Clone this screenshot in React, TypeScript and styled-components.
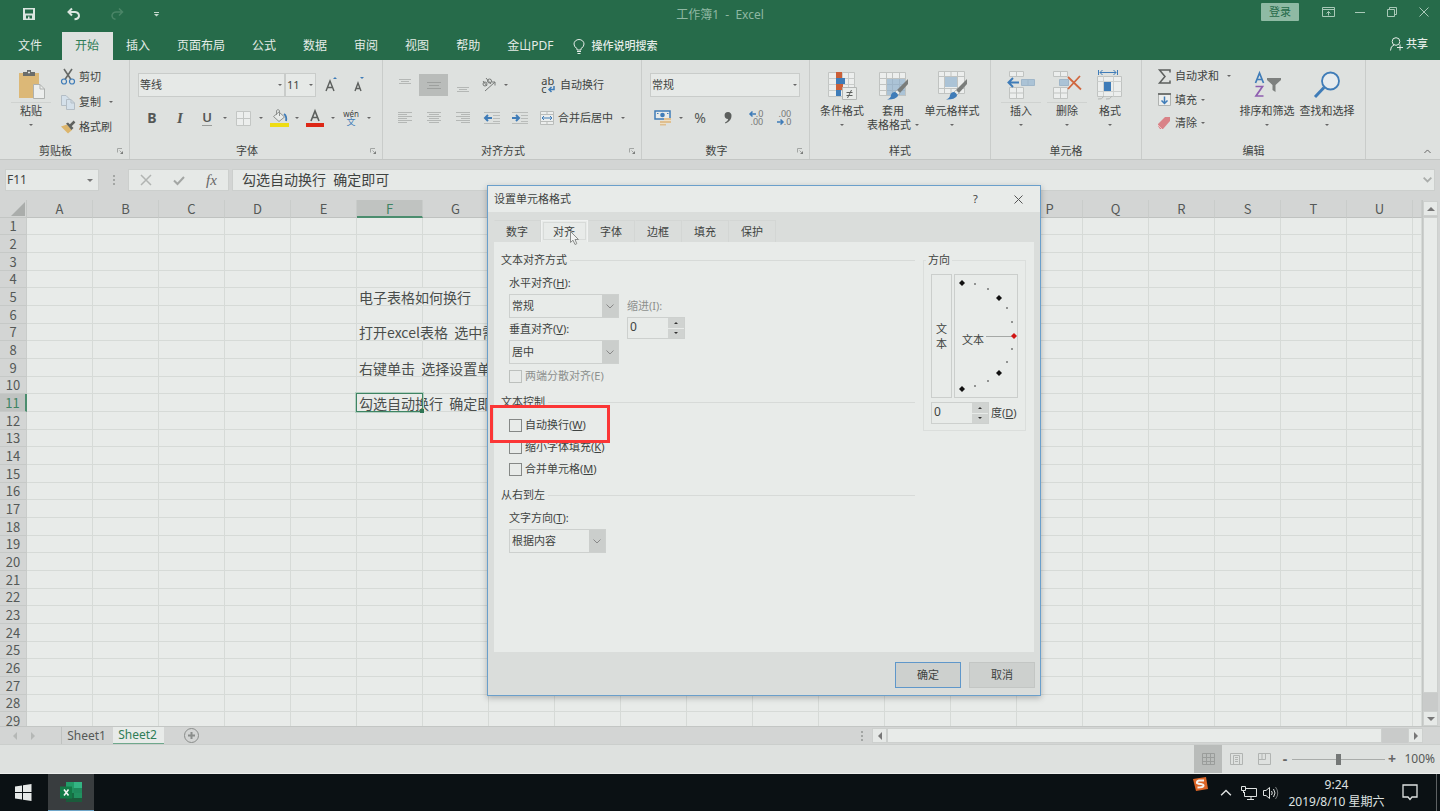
import React from "react";
import styled, { createGlobalStyle, css } from "styled-components";

const c = {
  green: "#266b4a",
  greenText: "#2f7d57",
  ribbon: "#dee1df",
  chrome: "#d3d5d4",
  field: "#e6e9e7",
  sheet: "#e8ebe9",
  line: "#d6dad7",
  edge: "#c3c6c4",
  ink: "#3f4341",
  muted: "#8d908e",
  blue: "#3f7cb8",
  panel: "#dadddb",
};

const ui = `"Noto Sans", "Noto Sans CJK SC", sans-serif`;
const cell = `"Noto Sans CJK SC", "Noto Sans", sans-serif`;

const Global = createGlobalStyle`
  *, *::before, *::after { box-sizing: border-box; }
  html, body { margin: 0; height: 100%; }
  body { font: 11px/14px ${ui}; color: ${c.ink}; background: ${c.chrome}; overflow: hidden; }
  button, input, select { font: inherit; color: inherit; margin: 0; padding: 0; border: 0; border-radius: 0; background: none; outline: none; }
  button { white-space: nowrap; }
  svg { display: block; flex: none; overflow: visible; }
`;

/* ---------- window shell ---------- */
const Shell = styled.div`
  position: relative;
  display: flex;
  flex-direction: column;
  height: 100vh;
`;
const TitleBar = styled.header`
  display: grid;
  grid-template-columns: 1fr auto 1fr;
  height: 32px;
  background: ${c.green};
  color: #d9e5de;
`;
const QuickAccess = styled.div`
  display: flex;
  height: 28px;
  padding-left: 6px;
`;
const TitleText = styled.div`
  padding-top: 8px;
  font-size: 12px;
  color: #8fb8a3;
  white-space: pre;
`;
const WindowControls = styled.div`
  display: flex;
  justify-content: flex-end;
  height: 24px;
  color: #a9c9b8;
`;
const ChromeButton = styled.button<{ $w: number }>`
  display: flex;
  align-items: center;
  justify-content: center;
  width: ${(p) => p.$w}px;
`;
const SignIn = styled.button`
  width: 38px;
  height: 18px;
  margin: 3px 13px 0 0;
  border-radius: 1px;
  background: #8fbaa4;
  color: ${c.green};
`;
const TabBar = styled.nav`
  display: flex;
  height: 28px;
  background: ${c.green};
  color: #e4ece7;
`;
const RibbonTab = styled.button<{ $active?: boolean; $file?: boolean }>`
  padding: 0 14px 0 13px;
  font-size: 12px;
  ${(p) => p.$file && css`padding: 0 20px 0 18px;`}
  ${(p) => p.$active && css`
    background: ${c.ribbon};
    color: ${c.greenText};
  `}
`;
const TellMe = styled.button`
  display: flex;
  align-items: center;
  gap: 6px;
  margin-left: 6px;
  font-weight: 500;
`;
const Share = styled.button`
  display: flex;
  align-items: center;
  gap: 3px;
  height: 24px;
  margin: 0 12px 0 auto;
  font-weight: 500;
`;

/* ---------- ribbon ---------- */
const Ribbon = styled.section`
  display: flex;
  height: 100px;
  background: ${c.ribbon};
  border-bottom: 1px solid ${c.edge};
`;
const Group = styled.div<{ $w: number }>`
  display: flex;
  flex-direction: column;
  width: ${(p) => p.$w}px;
  border-right: 1px solid #c9ccca;
`;
const GroupBody = styled.div<{ $left: number; $top: number }>`
  display: flex;
  flex: 1;
  padding: ${(p) => p.$top}px 0 0 ${(p) => p.$left}px;
`;
const GroupFoot = styled.div`
  display: flex;
  align-items: center;
  height: 16px;
  text-align: center;
  span { flex: 1; }
  button { display: flex; justify-content: center; width: 18px; }
`;
const Stack = styled.div<{ $gap: number; $w?: number }>`
  display: flex;
  flex-direction: column;
  gap: ${(p) => p.$gap}px;
  ${(p) => p.$w && css`width: ${p.$w}px;`}
`;
const ToolRow = styled.div`
  display: flex;
  align-items: center;
  height: 24px;
`;
const Cluster = styled.div`
  display: flex;
  width: 145px;
`;
const Tool = styled.button<{ $w?: number; $on?: boolean }>`
  display: flex;
  align-items: center;
  justify-content: center;
  width: ${(p) => p.$w ?? 28}px;
  height: 22px;
  background: ${(p) => (p.$on ? "#b9bcba" : "transparent")};
`;
const Drop = styled.button`
  display: flex;
  align-items: center;
  justify-content: center;
  width: 10px;
  height: 22px;
`;
const TextTool = styled.button<{ $h?: number }>`
  display: flex;
  align-items: center;
  gap: 4px;
  height: ${(p) => p.$h ?? 24}px;
`;
const ToolIcon = styled.span<{ $w: number }>`
  display: flex;
  justify-content: center;
  width: ${(p) => p.$w}px;
`;
const DropMark = styled.span`
  display: flex;
  padding-left: 4px;
`;
const BigTool = styled.button<{ $w: number }>`
  display: flex;
  flex-direction: column;
  align-items: center;
  width: ${(p) => p.$w}px;
  height: 64px;
`;
const BigIcon = styled.span<{ $split?: boolean }>`
  display: flex;
  align-items: center;
  justify-content: center;
  width: 40px;
  height: 33px;
  padding-bottom: 3px;
  margin-bottom: 1px;
  border-bottom: 1px solid ${(p) => (p.$split ? "#cfd2d0" : "transparent")};
`;
const BigLine = styled.span`
  display: flex;
  align-items: center;
  justify-content: center;
  gap: 4px;
  height: 14px;
`;
const Combo = styled.span<{ $w: number }>`
  position: relative;
  display: block;
  width: ${(p) => p.$w}px;
  height: 24px;
  select {
    width: 100%;
    height: 100%;
    padding: 0 12px 0 1px;
    appearance: none;
    background: ${c.field};
    border: 1px solid #c9ccca;
  }
  & + & select { border-left: 0; padding-left: 2px; font-size: 12px; }
  svg { position: absolute; right: 3px; top: 11px; pointer-events: none; }
`;
const SizeTools = styled.div`
  display: flex;
  padding-left: 2px;
`;
const Letter = styled.span<{ $size: number; $b?: boolean; $i?: boolean; $u?: boolean }>`
  font-size: ${(p) => p.$size}px;
  line-height: 16px;
  font-weight: ${(p) => (p.$b ? 700 : 400)};
  color: #555856;
  ${(p) => p.$i && css`font-family: "Liberation Serif", serif; font-style: italic; font-weight: 700;`}
  ${(p) => p.$u && css`font-weight: 600; line-height: 15px; border-bottom: 1px solid #999c9a;`}
`;
const Collapse = styled.button`
  align-self: flex-end;
  margin: 0 9px 6px auto;
`;

/* ---------- formula bar ---------- */
const FormulaRow = styled.div`
  display: flex;
  height: 40px;
  padding: 9px 5px 9px 5px;
  background: ${c.chrome};
`;
const NameBox = styled.div`
  display: flex;
  align-items: center;
  width: 94px;
  background: ${c.field};
  border: 1px solid #cccfcd;
  input { flex: 1; min-width: 0; padding-left: 1px; font-size: 12px; }
  button { width: 16px; display: flex; justify-content: center; }
`;
const Grip = styled.span`
  display: flex;
  align-items: center;
  justify-content: center;
  width: 29px;
`;
const FormulaTools = styled.div`
  display: flex;
  width: 101px;
  margin-right: 3px;
  background: ${c.field};
  border: 1px solid #cccfcd;
  button { flex: 1; display: flex; align-items: center; justify-content: center; }
`;
const Fx = styled.i`
  font: italic 15px/16px "Liberation Serif", serif;
  color: #666;
`;
const FormulaField = styled.div`
  display: flex;
  align-items: center;
  flex: 1;
  background: ${c.field};
  border: 1px solid #cccfcd;
  input { flex: 1; height: 18px; padding: 0 0 2px 9px; font-size: 14px; }
  button { padding-right: 2px; }
`;

/* ---------- worksheet ---------- */
const SheetArea = styled.main`
  display: flex;
  flex: 1;
  min-height: 0;
  background: ${c.chrome};
`;
const GridView = styled.div`
  flex: 1;
  overflow: hidden;
  background: ${c.sheet};
`;
const Grid = styled.table`
  width: 100%;
  table-layout: fixed;
  border-collapse: separate;
  border-spacing: 0;
  font: 14px/16px ${cell};
  color: #4a4e4c;
  th, td { padding: 0; height: inherit; }
  tbody tr { height: 18px; }
  tbody tr:nth-child(3n + 1) { height: 17px; }
  thead tr { height: 18px; }
`;
const Corner = styled.th`
  background: ${c.chrome};
  border-right: 1px solid ${c.edge};
  border-bottom: 1px solid ${c.edge};
  svg { margin: 1px 1px 0 auto; }
`;
const ColHead = styled.th<{ $on: boolean }>`
  font-size: 13px;
  font-weight: 400;
  background: ${(p) => (p.$on ? "#c0c3c1" : c.chrome)};
  color: ${(p) => (p.$on ? "#3e8463" : "#555957")};
  border-right: 1px solid #c9ccca;
  border-bottom: ${(p) => (p.$on ? "2px solid #4b8d6e" : "1px solid #bfc2c0")};
  line-height: 15px;
`;
const RowHead = styled.th<{ $on: boolean }>`
  font-size: 13px;
  font-weight: 400;
  background: ${(p) => (p.$on ? "#c0c3c1" : c.chrome)};
  color: ${(p) => (p.$on ? "#3e8463" : "#555957")};
  border-right: ${(p) => (p.$on ? "2px solid #4b8d6e" : "1px solid #c9ccca")};
  border-bottom: 1px solid #c6c9c7;
`;
const Cell = styled.td<{ $spill: boolean; $on: boolean }>`
  position: ${(p) => (p.$on ? "relative" : "static")};
  white-space: pre;
  border-right: 1px solid ${(p) => (p.$spill ? "transparent" : c.line)};
  border-bottom: 1px solid ${c.line};
  span { padding-left: 2px; }
  ${(p) => p.$on && css`
    &::before {
      content: "";
      position: absolute;
      inset: -1px -1px -1px -1px;
      border: 1px solid #3e8463;
      outline: 1px solid #b5d0c2;
    }
    &::after {
      content: "";
      position: absolute;
      right: -2px;
      bottom: -2px;
      width: 4px;
      height: 4px;
      background: #2f7555;
    }
  `}
`;
const VScroll = styled.div`
  display: flex;
  flex-direction: column;
  width: 18px;
  padding: 1px 2px 0 0;
  border-left: 1px solid ${c.edge};
`;
const ScrollButton = styled.button`
  display: flex;
  align-items: center;
  justify-content: center;
  width: 15px;
  height: 15px;
  background: ${c.field};
  border: 1px solid #cdd0ce;
`;
const VTrack = styled.div`
  flex: 1;
  padding: 1px 0 18px;
  background: #c9cbca;
`;
const Thumb = styled.div`
  width: 100%;
  height: 100%;
  background: ${c.sheet};
  border: 1px solid #cdd0ce;
`;

/* ---------- sheet tabs and status ---------- */
const SheetBar = styled.div`
  display: flex;
  height: 19px;
  background: ${c.chrome};
  border-top: 1px solid ${c.edge};
  border-bottom: 1px solid #cbcecc;
`;
const SheetNav = styled.div`
  display: flex;
  align-items: center;
  gap: 14px;
  width: 62px;
  padding-left: 13px;
  border-right: 1px solid #bfc2c0;
`;
const SheetTab = styled.button<{ $on?: boolean }>`
  width: 51px;
  height: 17px;
  padding-right: 2px;
  font-size: 12px;
  line-height: 14px;
  color: #555957;
  ${(p) => p.$on && css`
    background: ${c.sheet};
    color: ${c.greenText};
    border-bottom: 1px solid #6fa88c;
  `}
`;
const AddSheet = styled.button`
  margin-left: 20px;
`;
const HScroll = styled.div`
  display: flex;
  align-items: center;
  width: 563px;
  margin-left: auto;
  margin-right: 17px;
`;
const HTrack = styled.div`
  flex: 1;
  height: 15px;
  padding-right: 26px;
  background: #c9cbca;
`;
const StatusBar = styled.footer`
  display: flex;
  align-items: center;
  justify-content: flex-end;
  height: 29px;
  background: ${c.ribbon};
  border-bottom: 1px solid #eceeed;
`;
const ViewButton = styled.button<{ $on?: boolean }>`
  display: flex;
  align-items: center;
  justify-content: center;
  width: 28px;
  height: 100%;
  background: ${(p) => (p.$on ? "#b9bcba" : "transparent")};
`;
const ZoomStep = styled.button`
  width: 14px;
  font-size: 14px;
  font-weight: 700;
  color: #666;
`;
const ZoomRange = styled.input`
  width: 93px;
  height: 12px;
  appearance: none;
  background: linear-gradient(#a9acaa, #a9acaa) center / 100% 1px no-repeat;
  &::-webkit-slider-thumb { appearance: none; width: 5px; height: 11px; background: #747776; }
`;
const ZoomValue = styled.span`
  width: 36px;
  margin-right: 5px;
  text-align: right;
  font-size: 12px;
  color: #555957;
`;

/* ---------- dialog ---------- */
const Dialog = styled.section`
  position: absolute;
  left: 487px;
  top: 185px;
  width: 554px;
  background: ${c.panel};
  border: 1px solid #6a9fcb;
  box-shadow: 0 2px 6px rgba(0, 0, 0, 0.25);
`;
const DialogTitle = styled.div`
  display: flex;
  align-items: center;
  height: 26px;
  padding-left: 6px;
  background: ${c.sheet};
  span { flex: 1; }
  button { display: flex; justify-content: center; width: 43px; }
`;
const DialogBody = styled.div`
  padding: 8px 5px 7px 6px;
`;
const DialogTabs = styled.div`
  display: flex;
`;
const DialogTab = styled.button<{ $on?: boolean }>`
  position: relative;
  width: 47px;
  height: 22px;
  padding-right: 1px;
  border: 1px solid #d3d6d4;
  border-left-color: transparent;
  border-bottom: 0;
  ${(p) => p.$on && css`
    background: ${c.sheet};
    border-color: #f0f2f1;
    outline: 1px solid #d8dbd9;
    outline-offset: -3px;
  `}
  svg { position: absolute; left: 28px; top: 10px; }
`;
const Page = styled.div`
  display: flex;
  align-items: flex-start;
  gap: 8px;
  min-height: 410px;
  margin-right: 1px;
  padding: 10px 8px 0 7px;
  background: ${c.sheet};
`;
const Sections = styled.div`
  display: flex;
  flex-direction: column;
  flex: 1;
  gap: 11px;
`;
const SectionTitle = styled.h3`
  display: flex;
  align-items: center;
  gap: 3px;
  margin: 0 0 8px;
  font: inherit;
  line-height: 16px;
  &::after { content: ""; flex: 1; height: 1px; background: #d7dad8; }
`;
const Fields = styled.div`
  display: flex;
  gap: 8px;
  padding-left: 8px;
`;
const FieldStack = styled.div<{ $gap?: number; $top?: number }>`
  display: flex;
  flex-direction: column;
  align-items: flex-start;
  gap: ${(p) => p.$gap ?? 4}px;
  padding-top: ${(p) => p.$top ?? 0}px;
`;
const Check = styled.label<{ $off?: boolean }>`
  display: flex;
  align-items: center;
  gap: 3px;
  height: 14px;
  color: ${(p) => (p.$off ? c.muted : "inherit")};
  input {
    width: 13px;
    height: 13px;
    appearance: none;
    border: 1px solid ${(p) => (p.$off ? "#bcc0bd" : "#858886")};
  }
`;
const CheckBlock = styled.div`
  padding: 5px 0 0 8px;
`;
const Label = styled.label<{ $off?: boolean }>`
  color: ${(p) => (p.$off ? c.muted : "inherit")};
`;
const Picker = styled.span<{ $w: number }>`
  position: relative;
  display: block;
  width: ${(p) => p.$w}px;
  height: 24px;
  select {
    width: 100%;
    height: 100%;
    padding: 0 18px 0 2px;
    appearance: none;
    border: 1px solid #cdd0ce;
  }
  span {
    position: absolute;
    right: 1px;
    top: 1px;
    bottom: 1px;
    display: flex;
    align-items: center;
    justify-content: center;
    width: 16px;
    background: #cbcecc;
    pointer-events: none;
  }
`;
const Spin = styled.span`
  display: flex;
  width: 58px;
  height: 22px;
  border: 1px solid #cdd0ce;
  input { flex: 1; min-width: 0; padding: 0 0 2px 2px; font-size: 12px; }
`;
const SpinButtons = styled.span`
  display: flex;
  flex-direction: column;
  gap: 1px;
  width: 16px;
  button { flex: 1; display: flex; align-items: center; justify-content: center; background: #d0d3d1; }
`;
const Orientation = styled.fieldset`
  width: 103px;
  min-width: 0;
  margin: 0;
  padding: 6px 7px;
  border: 1px solid #dbdedc;
  legend { margin-left: -5px; padding: 0 2px; line-height: 16px; }
`;
const OrientRow = styled.div`
  display: flex;
  gap: 2px;
  align-items: center;
  & + & { margin-top: 4px; }
  label { white-space: nowrap; }
`;
const VerticalText = styled.button`
  width: 22px;
  height: 124px;
  padding: 0 4px;
  line-height: 15px;
  white-space: normal;
  border: 1px solid #cbcecc;
`;
const Dial = styled.div`
  position: relative;
  width: 64px;
  height: 124px;
  border: 1px solid #cbcecc;
  span { position: absolute; left: 7px; top: 58px; }
`;
const DialogFoot = styled.div`
  display: flex;
  justify-content: flex-end;
  gap: 8px;
  padding-top: 10px;
`;
const PushButton = styled.button<{ $main?: boolean }>`
  width: 66px;
  height: 26px;
  background: #cdd0ce;
  border: 1px solid ${(p) => (p.$main ? "#5f97ca" : "#c3c6c4")};
`;
const Marker = styled.div`
  position: absolute;
  left: 2px;
  top: 219px;
  width: 120px;
  height: 38px;
  border: 3px solid #fb3636;
  pointer-events: none;
`;

/* ---------- taskbar ---------- */
const Taskbar = styled.footer`
  display: flex;
  height: 37px;
  background: #0b1114;
  color: #dfe2e1;
`;
const TaskButton = styled.button<{ $w: number; $on?: boolean }>`
  display: flex;
  align-items: center;
  justify-content: center;
  width: ${(p) => p.$w}px;
  padding-right: 2px;
  ${(p) => p.$on && css`
    padding-right: 0;
    background: #393d3f;
    border-bottom: 1px solid #6fa6c9;
  `}
`;
const Tray = styled.div`
  display: flex;
  margin-left: auto;
  padding-right: 3px;
  button { display: flex; justify-content: center; align-items: center; }
`;
const SogouSlot = styled.button`
  width: 26px;
  padding-bottom: 17px;
`;
const TrayButton = styled.button<{ $w: number }>`
  width: ${(p) => p.$w}px;
`;
const Clock = styled.div`
  width: 109px;
  padding-top: 2px;
  font-size: 12px;
  line-height: 17px;
  text-align: center;
  white-space: nowrap;
`;
const ShowDesktop = styled.span`
  width: 1px;
  background: #5d6163;
`;

/* ---------- icons ---------- */
const Caret = ({ up, w = 4, color = "#666" }: { up?: boolean; w?: number; color?: string }) => (
  <svg width={w} height={w / 2} viewBox="0 0 4 2">
    <path d={up ? "M0 2L2 0L4 2Z" : "M0 0H4L2 2Z"} fill={color} />
  </svg>
);
const Side = ({ left, h = 8, color = "#777" }: { left?: boolean; h?: number; color?: string }) => (
  <svg width={h / 2} height={h} viewBox="0 0 4 8">
    <path d={left ? "M4 0V8L0 4Z" : "M0 0V8L4 4Z"} fill={color} />
  </svg>
);
const Chevron = ({ up, color = "#888", w = 8, bold }: { up?: boolean; color?: string; w?: number; bold?: boolean }) => (
  <svg width={w} height={w / 2 + 1} viewBox="0 0 8 5" fill="none" stroke={color} strokeWidth={bold ? 1.6 : 1}>
    <path d={up ? "M.5 4.5L4 1L7.5 4.5" : "M.5 .5L4 4L7.5 .5"} />
  </svg>
);
const Launcher = () => (
  <svg width="6" height="6" fill="none">
    <path d="M.5 4.500V.5H5" stroke="#a3a6a4" />
    <path d="M2.500 2.500L4.500 4.500" stroke="#a3a6a4" />
    <path d="M6 3V6H3Z" fill="#7c7f7d" />
  </svg>
);
const Lines = ({ rows }: { rows: [number, number, number][] }) => (
  <svg width="14" height="12" stroke="#b4b7b5">
    {rows.map(([x, w, y]) => (
      <path key={y} d={`M${x} ${y}.5h${w}`} />
    ))}
  </svg>
);
const MiddleLines = () => (
  <svg width="14" height="12" stroke="#9da09e">
    <path d="M0 3.500H14M2 6.500H12M0 9.500H14" />
  </svg>
);
const Indent = ({ right }: { right?: boolean }) => (
  <svg width="16" height="12" fill="none">
    <path d="M0 .5H16M9 3.500H16M9 6.500H16M9 9.500H16M0 11.500H16" stroke="#b9bcba" />
    <path d={right ? "M0 6H7M4 3L7 6L4 9" : "M8 6H1M4 3L1 6L4 9"} stroke={c.blue} strokeWidth="2" />
  </svg>
);
const PasteIcon = () => (
  <svg width="28" height="30">
    <path d="M2 3H22V28H2Z" fill="#dcb877" />
    <path d="M6 2H10V0H14V2H18V6H6Z" fill="#6a6d6b" />
    <path d="M11 2.500H13" stroke="#dee1df" strokeWidth="1.500" />
    <path d="M16.500 14.500H23L27.500 19V28.500H16.500Z" fill="#eceeed" stroke="#aeb1af" />
    <path d="M23 14.500V19H27.500" fill="none" stroke="#aeb1af" />
  </svg>
);
const CutIcon = () => (
  <svg width="14" height="16" fill="none">
    <path d="M3 0L10 10.500M11 0L4 10.500" stroke="#666967" strokeWidth="1.600" />
    <circle cx="3" cy="12.500" r="2.500" stroke={c.blue} strokeWidth="1.200" />
    <circle cx="11" cy="12.500" r="2.500" stroke={c.blue} strokeWidth="1.200" />
  </svg>
);
const CopyIcon = () => (
  <svg width="15" height="15" fill="#d4e0ea" stroke="#b3bdc5">
    <path d="M.5 .5H5L8.500 4V10.500H.5Z" />
    <path d="M5.500 4.500H10L13.500 8V14.500H5.500Z" />
    <path d="M10 4.500V8H13.500" fill="none" />
  </svg>
);
const BrushIcon = () => (
  <svg width="15" height="13">
    <path d="M0 5.500L6 3.500L11 9L7 12.500Z" fill="#dcb56c" />
    <path d="M5 2.500L7 1.500L12.500 7L10.500 9Z" fill="#5f6260" />
    <path d="M9 5L13.500 .5" stroke="#5f6260" strokeWidth="2.500" />
  </svg>
);
const FontSizeIcon = ({ down }: { down?: boolean }) => (
  <svg width="14" height="16" fill="none">
    <path d={down ? "M2 14L5 6L8 14M3 11.500H7" : "M1 14L5 4L9 14M2.500 10.500H7.500"} stroke="#5c5f5d" strokeWidth="1.400" />
    <path d={down ? "M7 0H11L9 2Z" : "M8 2L10 0L12 2Z"} fill={c.blue} />
  </svg>
);
const BordersIcon = () => (
  <svg width="15" height="15" fill="#eceeed" stroke="#c3c6c4">
    <path d="M.5 .5H14.500V14.500H.5ZM7.500 .5V14.500M.5 7.500H14.500" />
  </svg>
);
const FillIcon = () => (
  <svg width="19" height="18" fill="none">
    <path d="M9 3L14.500 8L9 12.500L3.500 7.500Z" fill="#e8ebe9" stroke="#8f9290" />
    <path d="M6.500 6V1.500Q8 -.5 9.500 1.500V7" stroke="#8f9290" />
    <path d="M14 5Q17 7 16 12" stroke={c.blue} strokeWidth="1.800" />
    <path d="M0 14H19V18H0Z" fill="#eedc14" />
  </svg>
);
const FontColorIcon = () => (
  <svg width="18" height="18" fill="none">
    <path d="M5 12L9 2L13 12M6.500 8.500H11.500" stroke="#5c5f5d" strokeWidth="1.600" />
    <path d="M0 14H18V18H0Z" fill="#dd2716" />
  </svg>
);
const Phonetic = styled.span`
  display: flex;
  flex-direction: column;
  align-items: center;
  font-size: 8px;
  line-height: 6px;
  b { font-weight: 400; font-size: 9px; line-height: 9px; color: ${c.blue}; }
`;
const OrientIcon = () => (
  <svg width="16" height="16" fill="none" stroke="#777a78">
    <circle cx="4" cy="7" r="2" />
    <path d="M2 4L6 9M5 1L10 7" />
    <circle cx="8.500" cy="4" r="2" />
    <path d="M4 14L14 5M10.500 5H14V8.500" />
  </svg>
);
const Abc = styled.span`
  display: flex;
  flex-direction: column;
  font-size: 11px;
  line-height: 8px;
  text-align: left;
  span { display: flex; align-items: center; gap: 1px; }
`;
const MergeIcon = () => (
  <svg width="14" height="14" fill="none">
    <path d="M.5 .5H13.500V13.500H.5ZM.5 3.500H13.500M.5 10.500H13.500M7 .5V3M7 11V13.500" fill="#eceeed" stroke="#b9bcba" />
    <path d="M2 7H12M4 5L2 7L4 9M10 5L12 7L10 9" stroke={c.blue} />
  </svg>
);
const MoneyIcon = () => (
  <svg width="18" height="16">
    <path d="M1 1H16V9H1Z" fill="#e8ebe9" stroke={c.blue} strokeWidth="1.500" />
    <circle cx="8.500" cy="5" r="2.300" fill={c.blue} />
    <path d="M3 3h1.500v1H3ZM13 3h1.500v1H13Z" fill={c.blue} />
    <path d="M10 8H17V13H10ZM6 11H12V15.500H6Z" fill="#dfbf90" />
    <path d="M10 10.500H17M6 13.500H12" stroke="#efe0c5" />
  </svg>
);
const CommaIcon = () => (
  <svg width="8" height="12">
    <path d="M4 0A3.500 3.500 0 0 1 7.500 4Q7.500 9 1.500 11.500L1 10.500Q4 9 4.200 7A3.500 3.500 0 1 1 4 0Z" fill="#5c5f5d" />
  </svg>
);
const Decimals = styled.span`
  display: flex;
  flex-direction: column;
  align-items: flex-end;
  font-size: 9px;
  line-height: 8px;
  color: #777a78;
  span { display: flex; align-items: center; }
`;
const SmallArrow = ({ left }: { left?: boolean }) => (
  <svg width="7" height="6" fill="none" stroke={c.blue} strokeWidth="1.500">
    <path d={left ? "M7 3H1M3.500 .5L1 3L3.500 5.500" : "M0 3H6M3.500 .5L6 3L3.500 5.500"} />
  </svg>
);
const ReturnArrow = () => (
  <svg width="7" height="6" fill="none" stroke={c.blue} strokeWidth="1.500">
    <path d="M6 0V3.500H1M3.500 1L1 3.500L3.500 6" />
  </svg>
);
const CondIcon = () => (
  <svg width="30" height="30" fill="none">
    <path d="M1.500 2.500H27.500V26.500H1.500Z" fill="#eceeed" stroke="#c2c5c3" />
    <path d="M1.500 8.500H27.500M1.500 14.500H27.500M1.500 20.500H27.500M9.500 2.500V26.500M15.500 2.500V26.500M21.500 2.500V26.500" stroke="#c9ccca" />
    <path d="M9 2H15V8H9ZM9 14H16V20H9Z" fill="#cb5f38" />
    <path d="M9 8H18V14H9ZM9 20H14V26H9Z" fill={c.blue} />
    <path d="M15.500 17.500H29.500V29.500H15.500Z" fill="#e8ebe9" stroke="#b3b6b4" />
    <path d="M19.500 22.500H25.500M19.500 25.500H25.500M24.500 20L20.500 28" stroke="#5c5f5d" />
  </svg>
);
const Brush = () => (
  <g>
    <path d="M30 9L30 14L22 23L19 20Z" fill="#7a7d7b" />
    <path d="M19 20L22 23L20 25L17 22Z" fill="#e8ebe9" stroke="#9a9d9b" strokeWidth=".6" />
    <path d="M17 22Q20 23 20 26Q17 30 9 29.500Q13 28 13 25Q14 22 17 22Z" fill={c.blue} />
  </g>
);
const TableFmtIcon = () => (
  <svg width="30" height="30" fill="none">
    <path d="M1.500 2.500H27.500V25.500H1.500Z" fill="#eceeed" />
    <path d="M8 8H28V26H8Z" fill="#abc3d6" />
    <path d="M1.500 2.500H27.500V25.500H1.500ZM1.500 8.500H27.500M1.500 14.500H8M1.500 20.500H8M8.500 2.500V25.500M14.500 2.500V8M21.500 2.500V8" stroke="#c0c3c1" />
    <path d="M9 14.500H27M9 20.500H27M14.500 9V25M21.500 9V25" stroke="#9fb6c9" />
    <Brush />
  </svg>
);
const CellStyleIcon = () => (
  <svg width="30" height="30" fill="none">
    <path d="M1.500 1.500H27.500V23.500H1.500Z" fill="#eceeed" />
    <path d="M1.500 1.500H27.500V23.500H1.500ZM1.500 6.500H27.500M1.500 18.500H27.500M7.500 1.500V23.500M20.500 1.500V23.500M14 1.500V6M14 19V23.500" stroke="#c0c3c1" />
    <path d="M8 7H20V17H8Z" fill="#abc3d6" />
    <Brush />
  </svg>
);
const InsertIcon = () => (
  <svg width="28" height="30" fill="none">
    <path d="M2.500 1.500H16.500V6.500H2.500ZM9.500 1.500V6.500M2.500 17.500H16.500V28.500H2.500ZM9.500 17.500V28.500M2.500 23H16.500" fill="#eceeed" stroke="#c0c3c1" />
    <path d="M14.500 9.500H27.500V15.500H14.500ZM21 9.500V15.500" fill="#abc3d6" stroke="#9fb6c9" />
    <path d="M12 12.500H2M6 8L1.500 12.500L6 17" stroke={c.blue} strokeWidth="2" />
  </svg>
);
const DeleteIcon = () => (
  <svg width="28" height="30" fill="none">
    <path d="M.5 1.500H14.500V6.500H.5ZM7.500 1.500V6.500M.5 17.500H14.500V28.500H.5ZM7.500 17.500V28.500M.5 23H14.500" fill="#eceeed" stroke="#c0c3c1" />
    <path d="M6.500 9.500H15.500V15.500H6.500Z" fill="#abc3d6" stroke="#9fb6c9" />
    <path d="M15 7L28 19.500M27 6L15 19" stroke="#d0673f" strokeWidth="1.800" />
  </svg>
);
const FormatIcon = () => (
  <svg width="26" height="30" fill="none">
    <path d="M3 2.500H19M5.500 0L3 2.500L5.500 5M16.500 0L19 2.500L16.500 5M1.500 0V5M20.500 0V5" stroke={c.blue} />
    <path d="M.5 6.500H24.500V26.500H.5Z" fill="#eceeed" stroke="#c0c3c1" />
    <path d="M6.500 6.500V26.500M16.500 6.500V26.500M.5 11.500H24.500M.5 21.500H24.500" stroke="#cdd0ce" />
    <path d="M7 12H14V21H7Z" fill={c.blue} />
    <path d="M1 29Q5 30 7 26M9 29Q13 30 15 26" stroke="#b3b6b4" />
  </svg>
);
const SumIcon = () => (
  <svg width="13" height="15" fill="none" stroke="#5c5f5d" strokeWidth="1.500">
    <path d="M12 3.500V1H1.500L7 7.500L1.500 14H12V11.500" />
  </svg>
);
const FillDownIcon = () => (
  <svg width="13" height="13" fill="none">
    <path d="M.5 .5H12.500V12.500H.5Z" fill="#eceeed" stroke="#b0b3b1" />
    <path d="M0 0H13V2H0Z" fill="#727573" />
    <path d="M6.500 3.500V10.500M3.500 7.500L6.500 10.500L9.500 7.500" stroke={c.blue} strokeWidth="1.500" />
  </svg>
);
const EraserIcon = () => (
  <svg width="12" height="12">
    <path d="M7 0H12V4L5 12H2L0 9V7Z" fill="#d98287" />
    <path d="M0 8L4 12" stroke="#eebfc1" />
  </svg>
);
const SortFilterIcon = () => (
  <svg width="28" height="28" fill="none">
    <path d="M2.500 12L6.500 2L10.500 12M4 8.500H9" stroke={c.blue} strokeWidth="1.700" />
    <path d="M2.500 15.500H9.500L3 25H10.500" stroke="#8e5eb0" strokeWidth="1.700" />
    <path d="M14 7H28V9L22.500 14V21L19.500 19V14L14 9Z" fill="#7d807e" />
  </svg>
);
const SearchIcon = () => (
  <svg width="28" height="28" fill="none" stroke={c.blue}>
    <circle cx="17.500" cy="10" r="8.500" strokeWidth="1.800" fill="#e6ebee" />
    <path d="M11 16.500L2 26" strokeWidth="3" />
  </svg>
);
const WinLogo = () => (
  <svg width="17" height="17" fill="#e6e9e8">
    <path d="M0 2.500L7 1.500V8H0ZM8 1.300L16.500 0V8H8ZM0 9H7V15.500L0 14.500ZM8 9H16.500V17L8 15.700Z" />
  </svg>
);
const ExcelLogo = () => (
  <svg width="23" height="21">
    <path d="M6 0H22V20H6Z" fill="#21905f" />
    <path d="M14 0H22V6H14Z" fill="#33b483" />
    <path d="M6 0H14V6H6Z" fill="#229b68" />
    <path d="M14 6H22V11H14Z" fill="#1f8a5c" />
    <path d="M6 11H14V16H6Z" fill="#176a43" />
    <path d="M6 16H22V20H6Z" fill="#1b5b3b" />
    <path d="M0 4.500H12V16.500H0Z" fill="#127a46" />
    <path d="M4 7.500L8.500 13.500M8.500 7.500L4 13.500" stroke="#f1f4f2" strokeWidth="1.600" />
  </svg>
);

/* ---------- data ---------- */
const columns = "ABCDEFGHIJKLMNOPQRSTU".split("");
const rowNumbers = Array.from({ length: 29 }, (_, i) => i + 1);
const notes: Record<number, { text: string; spill: string }> = {
  5: { text: "电子表格如何换行", spill: "F" },
  7: { text: "打开excel表格  选中需", spill: "FG" },
  9: { text: "右键单击  选择设置单", spill: "FG" },
  11: { text: "勾选自动换行  确定即可", spill: "FG" },
};
const moreTabs = ["插入", "页面布局", "公式", "数据", "审阅", "视图", "帮助", "金山PDF"];

const Key = ({ children, k, colon }: { children: React.ReactNode; k: string; colon?: boolean }) => (
  <span>
    {children}(<u>{k}</u>){colon && ":"}
  </span>
);

const RibbonGroup = ({ w, name, left, top, launch, children }: {
  w: number; name: string; left: number; top: number; launch?: boolean; children: React.ReactNode;
}) => (
  <Group $w={w}>
    <GroupBody $left={left} $top={top}>{children}</GroupBody>
    <GroupFoot>
      <span>{name}</span>
      {launch && <button aria-label={name}><Launcher /></button>}
    </GroupFoot>
  </Group>
);

const Split = ({ icon, w = 26, label }: { icon: React.ReactNode; w?: number; label: string }) => (
  <>
    <Tool $w={w} aria-label={label}>{icon}</Tool>
    <Drop aria-label={label}><Caret /></Drop>
  </>
);

const Big = ({ w, icon, lines, split }: { w: number; icon: React.ReactNode; lines: string[]; split?: boolean }) => (
  <BigTool $w={w}>
    <BigIcon $split={split}>{icon}</BigIcon>
    <BigLine>{lines[0]}</BigLine>
    <BigLine>{lines[1]}<Caret /></BigLine>
  </BigTool>
);

const Select = ({ id, w, value }: { id: string; w: number; value: string }) => (
  <Picker $w={w}>
    <select id={id}><option>{value}</option></select>
    <span><Chevron /></span>
  </Picker>
);

const Spinner = ({ id }: { id: string }) => (
  <Spin>
    <input id={id} defaultValue="0" />
    <SpinButtons>
      <button aria-label="+"><Caret up color="#333" /></button>
      <button aria-label="-"><Caret color="#333" /></button>
    </SpinButtons>
  </Spin>
);

const ClipStack = styled(Stack).attrs({ $gap: 1 })`
  margin: -5px 0 0 10px;
`;
const FindTools = styled.div`
  display: flex;
  padding-top: 6px;
`;
const WrapTool = styled(TextTool)`
  padding-left: 5px;
`;

const RibbonView = () => (
  <Ribbon>
    <RibbonGroup w={130} name="剪贴板" left={11} top={10} launch>
      <Big w={40} icon={<PasteIcon />} lines={["粘贴"]} split />
      <ClipStack>
        <TextTool><ToolIcon $w={14}><CutIcon /></ToolIcon>剪切</TextTool>
        <TextTool>
          <ToolIcon $w={14}><CopyIcon /></ToolIcon>复制
          <DropMark><Caret /></DropMark>
        </TextTool>
        <TextTool><ToolIcon $w={14}><BrushIcon /></ToolIcon>格式刷</TextTool>
      </ClipStack>
    </RibbonGroup>

    <RibbonGroup w={253} name="字体" left={8} top={13} launch>
      <Stack $gap={9}>
        <ToolRow>
          <Combo $w={147}><select aria-label="字体"><option>等线</option></select><Caret /></Combo>
          <Combo $w={31}><select aria-label="字号"><option>11</option></select><Caret /></Combo>
          <SizeTools>
            <Tool aria-label="A+"><FontSizeIcon /></Tool>
            <Tool aria-label="A-"><FontSizeIcon down /></Tool>
          </SizeTools>
        </ToolRow>
        <ToolRow>
          <Tool><Letter $size={14} $b>B</Letter></Tool>
          <Tool><Letter $size={15} $i>I</Letter></Tool>
          <Split label="U" icon={<Letter $size={13} $u>U</Letter>} />
          <Split label="边框" icon={<BordersIcon />} />
          <Split label="填充" icon={<FillIcon />} />
          <Split label="颜色" icon={<FontColorIcon />} />
          <Split label="拼音" icon={<Phonetic>wén<b>文</b></Phonetic>} />
        </ToolRow>
      </Stack>
    </RibbonGroup>

    <RibbonGroup w={259} name="对齐方式" left={7} top={13} launch>
      <Stack $gap={9}>
        <ToolRow>
          <Cluster>
            <Tool $w={29} aria-label="top"><Lines rows={[[1, 12, 0], [3, 8, 2], [1, 12, 4]]} /></Tool>
            <Tool $w={29} $on aria-label="middle"><MiddleLines /></Tool>
            <Tool $w={29} aria-label="bottom"><Lines rows={[[1, 12, 8], [3, 8, 10], [1, 12, 12]]} /></Tool>
            <Split label="方向" w={24} icon={<OrientIcon />} />
          </Cluster>
          <WrapTool>
            <ToolIcon $w={16}><Abc><span>ab</span><span>c<ReturnArrow /></span></Abc></ToolIcon>自动换行
          </WrapTool>
        </ToolRow>
        <ToolRow>
          <Cluster>
            <Tool $w={29} aria-label="left"><Lines rows={[[0, 14, 0], [0, 9, 2], [0, 14, 4], [0, 9, 6], [0, 14, 8], [0, 9, 10]]} /></Tool>
            <Tool $w={29} aria-label="center"><Lines rows={[[0, 14, 0], [2, 10, 2], [0, 14, 4], [2, 10, 6], [0, 14, 8], [2, 10, 10]]} /></Tool>
            <Tool $w={29} aria-label="right"><Lines rows={[[0, 14, 0], [5, 9, 2], [0, 14, 4], [5, 9, 6], [0, 14, 8], [5, 9, 10]]} /></Tool>
            <Tool $w={29} aria-label="outdent"><Indent /></Tool>
            <Tool $w={28} aria-label="indent"><Indent right /></Tool>
          </Cluster>
          <WrapTool>
            <ToolIcon $w={14}><MergeIcon /></ToolIcon>合并后居中
            <DropMark><Caret /></DropMark>
          </WrapTool>
        </ToolRow>
      </Stack>
    </RibbonGroup>

    <RibbonGroup w={168} name="数字" left={8} top={13} launch>
      <Stack $gap={9}>
        <ToolRow>
          <Combo $w={150}><select aria-label="数字"><option>常规</option></select><Caret /></Combo>
        </ToolRow>
        <ToolRow>
          <Split label="货币" icon={<MoneyIcon />} />
          <Tool><Letter $size={14}>%</Letter></Tool>
          <Tool aria-label=","><CommaIcon /></Tool>
          <Tool><Decimals><span><SmallArrow left />.0</span><span>.00</span></Decimals></Tool>
          <Tool><Decimals><span>.00</span><span><SmallArrow />.0</span></Decimals></Tool>
        </ToolRow>
      </Stack>
    </RibbonGroup>

    <RibbonGroup w={181} name="样式" left={6} top={10}>
      <Big w={52} icon={<CondIcon />} lines={["条件格式"]} />
      <Big w={50} icon={<TableFmtIcon />} lines={["套用", "表格格式"]} />
      <Big w={68} icon={<CellStyleIcon />} lines={["单元格样式"]} />
    </RibbonGroup>

    <RibbonGroup w={151} name="单元格" left={7} top={10}>
      <Big w={46} icon={<InsertIcon />} lines={["插入"]} split />
      <Big w={46} icon={<DeleteIcon />} lines={["删除"]} split />
      <Big w={40} icon={<FormatIcon />} lines={["格式"]} />
    </RibbonGroup>

    <RibbonGroup w={224} name="编辑" left={15} top={4}>
      <Stack $gap={0} $w={80}>
        <TextTool><ToolIcon $w={14}><SumIcon /></ToolIcon>自动求和<DropMark><Caret /></DropMark></TextTool>
        <TextTool $h={23}><ToolIcon $w={14}><FillDownIcon /></ToolIcon>填充<Caret /></TextTool>
        <TextTool><ToolIcon $w={14}><EraserIcon /></ToolIcon>清除<Caret /></TextTool>
      </Stack>
      <FindTools>
        <Big w={60} icon={<SortFilterIcon />} lines={["排序和筛选"]} />
        <Big w={60} icon={<SearchIcon />} lines={["查找和选择"]} />
      </FindTools>
    </RibbonGroup>
    <Collapse aria-label="折叠"><Chevron up w={7} color="#555" /></Collapse>
  </Ribbon>
);

const Worksheet = () => (
  <SheetArea>
    <GridView>
      <Grid>
        <colgroup>
          <col style={{ width: 27 }} />
          {columns.map((n) => <col key={n} style={{ width: 66 }} />)}
          <col />
        </colgroup>
        <thead>
          <tr>
            <Corner>
              <svg width="14" height="14"><path d="M14 0V14H0Z" fill="#aaadab" /></svg>
            </Corner>
            {columns.map((n) => <ColHead key={n} $on={n === "F"}>{n}</ColHead>)}
            <ColHead $on={false} />
          </tr>
        </thead>
        <tbody>
          {rowNumbers.map((r) => (
            <tr key={r}>
              <RowHead $on={r === 11}>{r}</RowHead>
              {columns.map((n) => (
                <Cell key={n} $on={r === 11 && n === "F"} $spill={!!notes[r]?.spill.includes(n)}>
                  {n === "F" && notes[r] && <span>{notes[r].text}</span>}
                </Cell>
              ))}
              <Cell $on={false} $spill={false} />
            </tr>
          ))}
        </tbody>
      </Grid>
    </GridView>
    <VScroll>
      <ScrollButton aria-label="up"><Caret up w={8} color="#777" /></ScrollButton>
      <VTrack><Thumb /></VTrack>
      <ScrollButton aria-label="down"><Caret w={8} color="#777" /></ScrollButton>
    </VScroll>
  </SheetArea>
);

const dots: [number, number][] = [[20, 9], [33, 14], [52, 33], [57, 47], [57, 74], [52, 87], [33, 106], [20, 111]];
const marks: [number, number, string][] = [
  [7, 8, "#111"], [44, 23, "#111"], [59, 61, "#d01515"], [44, 98, "#111"], [7, 114, "#111"],
];

const FormatDialog = () => (
  <Dialog role="dialog" aria-label="设置单元格格式">
    <DialogTitle>
      <span>设置单元格格式</span>
      <button>?</button>
      <button aria-label="关闭">
        <svg width="9" height="9" stroke="#555"><path d="M.5 .5L8.500 8.500M8.500 .5L.5 8.500" /></svg>
      </button>
    </DialogTitle>
    <DialogBody>
      <DialogTabs>
        <DialogTab>数字</DialogTab>
        <DialogTab $on>
          对齐
          <svg width="10" height="15">
            <path d="M.5 .5V11.500L3 9.200L5 13.500L6.800 12.700L5 8.500H8.500Z" fill="#f1f3f2" stroke="#8a8d8b" />
          </svg>
        </DialogTab>
        {["字体", "边框", "填充", "保护"].map((t) => <DialogTab key={t}>{t}</DialogTab>)}
      </DialogTabs>
      <Page>
        <Sections>
          <section>
            <SectionTitle>文本对齐方式</SectionTitle>
            <Fields>
              <FieldStack>
                <Label htmlFor="h"><Key k="H" colon>水平对齐</Key></Label>
                <Select id="h" w={110} value="常规" />
                <Label htmlFor="v"><Key k="V" colon>垂直对齐</Key></Label>
                <Select id="v" w={110} value="居中" />
              </FieldStack>
              <FieldStack $top={23}>
                <Label htmlFor="indent" $off>缩进(I):</Label>
                <Spinner id="indent" />
              </FieldStack>
            </Fields>
            <CheckBlock>
              <Check $off><input type="checkbox" disabled />两端分散对齐(E)</Check>
            </CheckBlock>
          </section>
          <section>
            <SectionTitle>文本控制</SectionTitle>
            <Fields>
              <FieldStack $gap={8}>
                <Check><input type="checkbox" /><Key k="W">自动换行</Key></Check>
                <Check><input type="checkbox" /><Key k="K">缩小字体填充</Key></Check>
                <Check><input type="checkbox" /><Key k="M">合并单元格</Key></Check>
              </FieldStack>
            </Fields>
          </section>
          <section>
            <SectionTitle>从右到左</SectionTitle>
            <Fields>
              <FieldStack>
                <Label htmlFor="dir"><Key k="T" colon>文字方向</Key></Label>
                <Select id="dir" w={97} value="根据内容" />
              </FieldStack>
            </Fields>
          </section>
        </Sections>
        <Orientation>
          <legend>方向</legend>
          <OrientRow>
            <VerticalText>文本</VerticalText>
            <Dial>
              <span>文本</span>
              <svg width="62" height="122">
                <path d="M31 61.500H57" stroke="#a5a8a6" />
                {dots.map(([x, y]) => <circle key={`${x}-${y}`} cx={x} cy={y} r=".8" fill="#222" />)}
                {marks.map(([x, y, f]) => (
                  <path key={`${x}-${y}`} d={`M${x - 3} ${y}l3 -3l3 3l-3 3Z`} fill={f} />
                ))}
              </svg>
            </Dial>
          </OrientRow>
          <OrientRow>
            <Spinner id="deg" />
            <label htmlFor="deg"><Key k="D">度</Key></label>
          </OrientRow>
        </Orientation>
      </Page>
      <DialogFoot>
        <PushButton $main>确定</PushButton>
        <PushButton>取消</PushButton>
      </DialogFoot>
    </DialogBody>
    <Marker />
  </Dialog>
);

export default function App() {
  return (
    <Shell>
      <Global />
      <TitleBar>
        <QuickAccess>
          <ChromeButton $w={45} aria-label="保存">
            <svg width="12" height="12"><path d="M0 0H12V12H0ZM2 1.500V5.500H10V1.500ZM3 7.500V10.500H5V8.500H6.500V10.500H9V7.500Z" fill="#dbe6e0" fillRule="evenodd" /></svg>
          </ChromeButton>
          <ChromeButton $w={44} aria-label="撤消">
            <svg width="13" height="12" fill="none" stroke="#dbe6e0" strokeWidth="2"><path d="M5 .5L1.500 4L5 7.500M2 4H8Q12 4.500 12 8Q11.500 11 7.500 11.300" /></svg>
          </ChromeButton>
          <ChromeButton $w={44} aria-label="恢复">
            <svg width="13" height="12" fill="none" stroke="#4a8567" strokeWidth="1.500"><path d="M8 .5L11.500 4L8 7.500M11 4H5Q1 4.500 1 8Q1.500 11 4.500 11.300" /></svg>
          </ChromeButton>
          <ChromeButton $w={34} aria-label="自定义">
            <svg width="5" height="5"><path d="M0 0H5V1H0ZM0 2H5L2.500 4.500Z" fill="#c5d8cd" /></svg>
          </ChromeButton>
        </QuickAccess>
        <TitleText>{"工作簿1  -  Excel"}</TitleText>
        <WindowControls>
          <SignIn>登录</SignIn>
          <ChromeButton $w={32} aria-label="功能区选项">
            <svg width="13" height="10" fill="none" stroke="currentColor"><path d="M.5 .5H12.500V9.500H.5ZM.5 2.500H12.500M6.500 8.500V4.500M4.500 6.500L6.500 4.500L8.500 6.500" /></svg>
          </ChromeButton>
          <ChromeButton $w={32} aria-label="最小化">
            <svg width="10" height="1"><path d="M0 0H10V1H0Z" fill="currentColor" /></svg>
          </ChromeButton>
          <ChromeButton $w={32} aria-label="还原">
            <svg width="10" height="10" fill="none" stroke="currentColor"><path d="M.5 2.500H7.500V9.500H.5ZM2.500 2.500V.5H9.500V7.500H7.500" /></svg>
          </ChromeButton>
          <ChromeButton $w={32} aria-label="关闭">
            <svg width="10" height="10" fill="none" stroke="currentColor"><path d="M.5 .5L9.500 9.500M9.500 .5L.5 9.500" /></svg>
          </ChromeButton>
        </WindowControls>
      </TitleBar>
      <TabBar>
        <RibbonTab $file>文件</RibbonTab>
        <RibbonTab $active>开始</RibbonTab>
        {moreTabs.map((t) => <RibbonTab key={t}>{t}</RibbonTab>)}
        <TellMe>
          <svg width="12" height="15" fill="none" stroke="#e4ece7"><path d="M4 11V9.500Q1 8 1 5A5 4.500 0 0 1 11 5Q11 8 8 9.500V11ZM4 12.500H8M4.500 14.500H7.500" /></svg>
          操作说明搜索
        </TellMe>
        <Share>
          <svg width="13" height="14" fill="none" stroke="#e4ece7"><circle cx="6" cy="4.500" r="3.800" /><path d="M.5 13.500Q.5 9 4 8M10 7.500V13.500M7 10.500H13" /></svg>
          共享
        </Share>
      </TabBar>
      <RibbonView />
      <FormulaRow>
        <NameBox>
          <input aria-label="名称框" defaultValue="F11" />
          <button aria-label="名称"><Caret w={6} color="#777" /></button>
        </NameBox>
        <Grip><svg width="2" height="10" fill="#a3a6a4"><path d="M0 0h2v2H0ZM0 4h2v2H0ZM0 8h2v2H0Z" /></svg></Grip>
        <FormulaTools>
          <button aria-label="取消"><svg width="10" height="10" stroke="#b1b4b2" strokeWidth="1.500"><path d="M0 0L10 10M10 0L0 10" /></svg></button>
          <button aria-label="输入"><svg width="12" height="9" fill="none" stroke="#a3a6a4" strokeWidth="2"><path d="M1 4.500L4.500 8L11 1" /></svg></button>
          <button><Fx>fx</Fx></button>
        </FormulaTools>
        <FormulaField>
          <input aria-label="编辑栏" defaultValue={"勾选自动换行  确定即可"} />
          <button aria-label="展开"><Chevron w={9} color="#aaadab" bold /></button>
        </FormulaField>
      </FormulaRow>
      <Worksheet />
      <SheetBar>
        <SheetNav><Side left color="#b5b8b6" /><Side color="#b5b8b6" /></SheetNav>
        <SheetTab>Sheet1</SheetTab>
        <SheetTab $on>Sheet2</SheetTab>
        <AddSheet aria-label="新工作表">
          <svg width="15" height="15" fill="none" stroke="#8a8d8b"><circle cx="7.500" cy="7.500" r="7" /><path d="M7.500 4V11M4 7.500H11" strokeWidth="2" /></svg>
        </AddSheet>
        <HScroll>
          <svg width="12" height="10" fill="#a3a6a4"><path d="M1 0h2v2h-2ZM1 4h2v2h-2ZM1 8h2v2h-2Z" /></svg>
          <ScrollButton aria-label="left"><Side left /></ScrollButton>
          <HTrack><Thumb /></HTrack>
          <ScrollButton aria-label="right"><Side /></ScrollButton>
        </HScroll>
      </SheetBar>
      <StatusBar>
        <ViewButton $on aria-label="普通"><svg width="13" height="12" fill="none" stroke="#9a9d9b"><path d="M.5 .5H12.500V11.500H.5ZM.5 4.500H12.500M.5 8.500H12.500M4.500 .5V11.500M8.500 .5V11.500" /></svg></ViewButton>
        <ViewButton aria-label="页面布局"><svg width="13" height="12" fill="none" stroke="#b1b4b2"><path d="M.5 .5H12.500V11.500H.5ZM3.500 2.500H9.500V11.500M3.500 2.500V11.500M5 4.500H8M5 6.500H8M5 8.500H8" /></svg></ViewButton>
        <ViewButton aria-label="分页预览"><svg width="13" height="12" fill="none" stroke="#b1b4b2"><path d="M.5 .5H12.500V11.500H.5ZM.5 6.500H7.500V.5M4 .5V6.500" /></svg></ViewButton>
        <ZoomStep>-</ZoomStep>
        <ZoomRange type="range" aria-label="缩放" defaultValue={50} />
        <ZoomStep>+</ZoomStep>
        <ZoomValue>100%</ZoomValue>
      </StatusBar>
      <Taskbar>
        <TaskButton $w={48} aria-label="开始"><WinLogo /></TaskButton>
        <TaskButton $w={46} $on aria-label="Excel"><ExcelLogo /></TaskButton>
        <Tray>
          <SogouSlot aria-label="输入法">
            <svg width="15" height="14"><path d="M0 2L13 0L15 12L3 14Z" fill="#dd6526" /><path d="M11 3.500L6 3.500Q3.500 4 4 6Q5 7 8 7Q11 7.500 10.500 9Q10 10.500 4.500 10.500" fill="none" stroke="#f4f1ee" strokeWidth="2" /></svg>
          </SogouSlot>
          <TrayButton $w={26} aria-label="更多"><Chevron up w={12} color="#dfe2e1" /></TrayButton>
          <TrayButton $w={20} aria-label="网络">
            <svg width="16" height="14" fill="none" stroke="#dfe2e1"><path d="M5 2.500H15.500V10.500H3.500V6M10 10.500V13M6 13.500H13M.5 .5H4.500V4.500H.5ZM2.500 4.500V7" /></svg>
          </TrayButton>
          <TrayButton $w={23} aria-label="音量">
            <svg width="16" height="14" fill="none" stroke="#dfe2e1"><path d="M.5 4.500H3L6.500 1.500V12.500L3 9.500H.5ZM8.500 5Q10 7 8.500 9M10.500 3Q13.500 7 10.500 11" /><path d="M12.500 1Q17 7 12.500 13" stroke="#777b7c" /></svg>
          </TrayButton>
          <Clock>9:24<br />2019/8/10 星期六</Clock>
          <TrayButton $w={37} aria-label="通知">
            <svg width="16" height="17" fill="none" stroke="#dfe2e1" strokeWidth="1.300"><path d="M1 1H15V13H10L8 15.500L6 13H1Z" /></svg>
          </TrayButton>
          <TrayButton $w={8} aria-label="桌面" />
          <ShowDesktop />
        </Tray>
      </Taskbar>
      <FormatDialog />
    </Shell>
  );
}
